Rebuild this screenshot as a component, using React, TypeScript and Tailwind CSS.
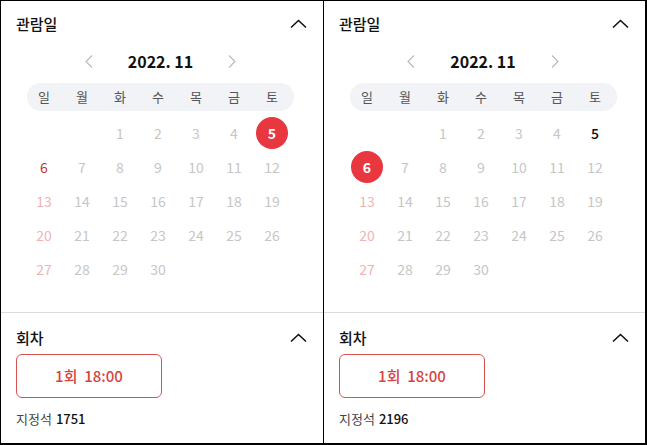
import React from "react";

type Props = { selected: number; available: number[]; seats: string; rightEdge?: boolean };

const Chevron = () => (
  <svg width="17" height="10" viewBox="0 0 17 10" fill="none">
    <path d="M1 8.5 L8.5 1.5 L16 8.5" stroke="#111" strokeWidth="1.6" />
  </svg>
);

const Arrow = ({ dir }: { dir: "l" | "r" }) => (
  <svg width="8" height="13" viewBox="0 0 8 13" fill="none">
    <path d={dir === "l" ? "M7 0.5 L1 6.5 L7 12.5" : "M1 0.5 L7 6.5 L1 12.5"} stroke="#bbbbbb" strokeWidth="1.2" />
  </svg>
);

function Panel({ selected, available, seats, rightEdge }: Props) {
  const cells: (number | null)[] = [null, null];
  for (let d = 1; d <= 30; d++) cells.push(d);
  const week = ["일", "월", "화", "수", "목", "금", "토"];
  return (
    <div
      className={
        "flex flex-col border-l border-t border-b-2 border-black bg-white " +
        (rightEdge ? "w-[324px] border-r-2" : "w-[323px]")
      }
    >
      <div className="px-[15px] pt-[9px]">
        <div className="flex h-[28px] items-center justify-between">
          <span className="text-[15px] font-medium text-[#111]">관람일</span>
          <span className="mr-[1px] flex items-center"><Chevron /></span>
        </div>
        <div className="mt-[11px] flex h-[24px] items-center justify-center gap-[35px] pr-[3px]">
          <Arrow dir="l" />
          <span className="text-[16px] font-bold text-[#111]">2022. 11</span>
          <Arrow dir="r" />
        </div>
        <div className="ml-[11px] mt-[10px] flex h-[28px] w-[267px] items-center rounded-full bg-[#f2f3f7]">
          <div className="-ml-[2px] grid grid-cols-[repeat(7,38px)]">
            {week.map((w) => (
              <span key={w} className="text-center text-[13px] text-[#555]">{w}</span>
            ))}
          </div>
        </div>
        <div className="ml-[9px] mt-[5px] grid grid-cols-[repeat(7,38px)]">
          {cells.map((d, i) => {
            if (d === null) return <div key={i} className="h-[34px]" />;
            const sunday = i % 7 === 0;
            const isSel = d === selected;
            const isAvail = available.includes(d);
            let cls = "text-[#c6c6c6]";
            if (sunday) cls = "text-[#f0b4b4]";
            if (isAvail) cls = sunday ? "text-[#c0342e]" : "text-[#111] font-medium";
            return (
              <div key={i} className="flex h-[34px] items-center justify-center">
                {isSel ? (
                  <span className="flex h-[32px] w-[32px] items-center justify-center rounded-full bg-[#e8373f] text-[14px] font-bold text-white">
                    {d}
                  </span>
                ) : (
                  <span className={"text-[14px] " + cls}>{d}</span>
                )}
              </div>
            );
          })}
        </div>
      </div>
      <div className="mt-[26px] h-px bg-[#dcdcdc]" />
      <div className="px-[15px]">
        <div className="mt-[11px] flex h-[28px] items-center justify-between">
          <span className="text-[15px] font-medium text-[#111]">회차</span>
          <span className="mr-[1px] flex items-center"><Chevron /></span>
        </div>
        <div className="mt-[2px] flex h-[44px] w-[146px] items-center justify-center rounded-[6px] border border-[#db5350] text-[15px] font-medium text-[#d4463f]">
          1회&nbsp;&nbsp;18:00
        </div>
        <div className="mt-[11px] flex h-[20px] items-center text-[13px]">
          <span className="text-[#444]">지정석</span>
          <span className="ml-[4px] font-medium text-[#111]">{seats}</span>
        </div>
      </div>
    </div>
  );
}

export default function App() {
  return (
    <div className="flex h-[445px] w-[647px] bg-white font-['Noto_Sans_CJK_KR','Noto_Sans',sans-serif]">
      <Panel selected={5} available={[5, 6]} seats="1751" />
      <Panel selected={6} available={[5, 6]} seats="2196" rightEdge />
    </div>
  );
}
